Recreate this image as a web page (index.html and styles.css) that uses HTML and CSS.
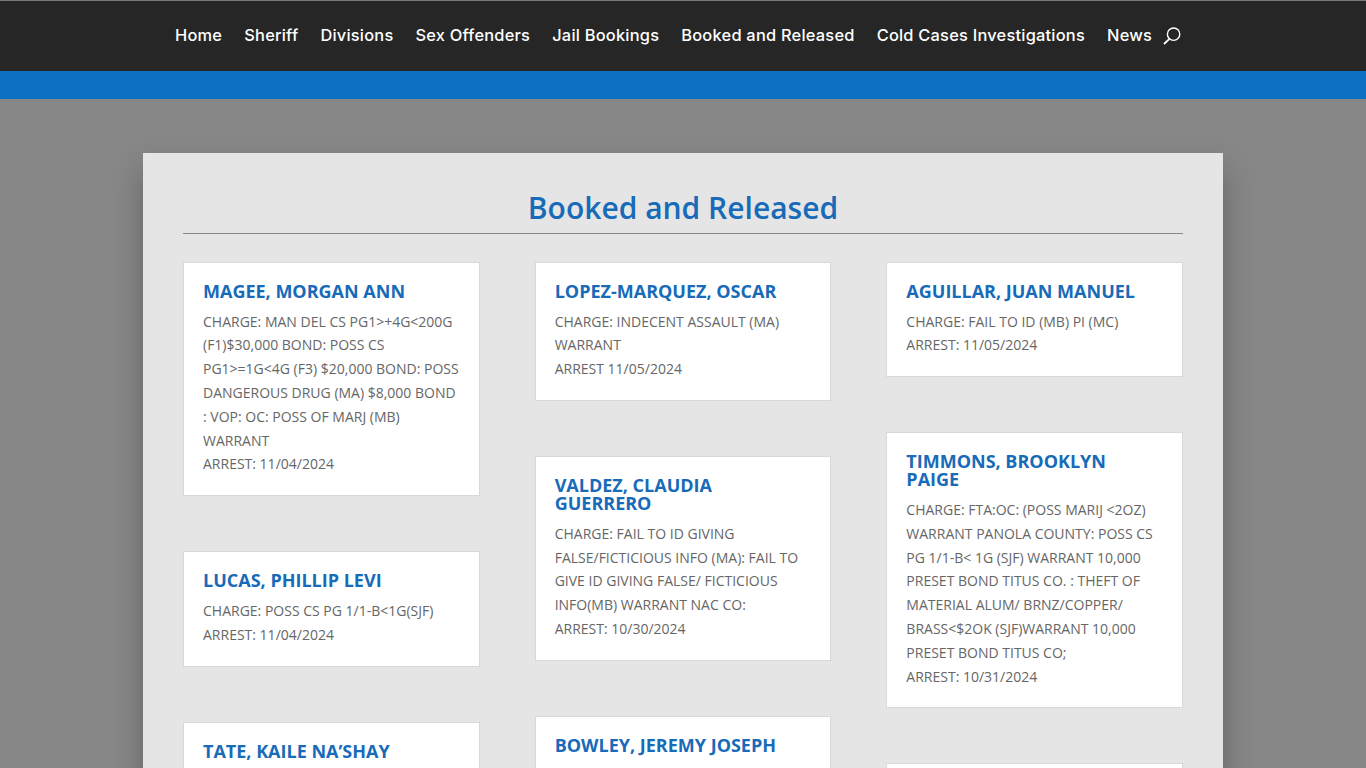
FILE: index.html
```html
<!DOCTYPE html>
<html lang="en">

<head>
    <meta charset="UTF-8">
    <meta name="viewport" content="width=device-width, initial-scale=1.0">
    <title>Booked and Released</title>
    <link rel="stylesheet" href="styles.css">
</head>

<body>
    <div class="page">
        <header class="main-header">
            <nav class="main-nav">
                <a href="#">Home</a>
                <a href="#">Sheriff</a>
                <a href="#">Divisions</a>
                <a href="#">Sex Offenders</a>
                <a href="#">Jail Bookings</a>
                <a href="#">Booked and Released</a>
                <a href="#">Cold Cases Investigations</a>
                <a href="#">News</a>
            </nav>
            <button class="search-btn" aria-label="Search">
                <svg width="18" height="18" viewBox="0 0 18 18" fill="none" stroke="#fff" stroke-width="1.4">
                    <circle cx="10.6" cy="7.2" r="6.2" />
                    <path d="M6.4 11.8 L1 17" stroke-width="1.8" />
                </svg>
            </button>
        </header>
        <div class="blue-bar"></div>

        <main class="panel">
            <h1 class="panel-title">Booked and Released</h1>
            <div class="columns">
                <div class="column">
                    <article class="card">
                        <h2>MAGEE, MORGAN ANN</h2>
                        <p>CHARGE: MAN DEL CS PG1&gt;+4G&lt;200G (F1)$30,000 BOND: POSS CS PG1&gt;=1G&lt;4G (F3) $20,000 BOND: POSS DANGEROUS DRUG (MA) $8,000 BOND : VOP: OC: POSS OF MARJ (MB) WARRANT<br>ARREST: 11/04/2024</p>
                    </article>
                    <article class="card">
                        <h2>LUCAS, PHILLIP LEVI</h2>
                        <p>CHARGE: POSS CS PG 1/1-B&lt;1G(SJF)<br>ARREST: 11/04/2024</p>
                    </article>
                    <article class="card">
                        <h2>TATE, KAILE NA’SHAY</h2>
                    </article>
                </div>
                <div class="column">
                    <article class="card">
                        <h2>LOPEZ-MARQUEZ, OSCAR</h2>
                        <p>CHARGE: INDECENT ASSAULT (MA) WARRANT<br>ARREST 11/05/2024</p>
                    </article>
                    <article class="card">
                        <h2>VALDEZ, CLAUDIA GUERRERO</h2>
                        <p>CHARGE: FAIL TO ID GIVING FALSE/FICTICIOUS INFO (MA): FAIL TO GIVE ID GIVING FALSE/ FICTICIOUS INFO(MB) WARRANT NAC CO:<br>ARREST: 10/30/2024</p>
                    </article>
                    <article class="card">
                        <h2>BOWLEY, JEREMY JOSEPH</h2>
                    </article>
                </div>
                <div class="column">
                    <article class="card">
                        <h2>AGUILLAR, JUAN MANUEL</h2>
                        <p>CHARGE: FAIL TO ID (MB) PI (MC)<br>ARREST: 11/05/2024</p>
                    </article>
                    <article class="card">
                        <h2>TIMMONS, BROOKLYN PAIGE</h2>
                        <p>CHARGE: FTA:OC: (POSS MARIJ &lt;2OZ) WARRANT PANOLA COUNTY: POSS CS PG 1/1-B&lt; 1G (SJF) WARRANT 10,000 PRESET BOND TITUS CO. : THEFT OF MATERIAL ALUM/ BRNZ/COPPER/ BRASS&lt;$2OK (SJF)WARRANT 10,000 PRESET BOND TITUS CO;<br>ARREST: 10/31/2024</p>
                    </article>
                    <article class="card card-empty"></article>
                </div>
            </div>
        </main>
    </div>
</body>

</html>
```

FILE: styles.css
```css
* {
    box-sizing: border-box;
}

html,
body {
    margin: 0;
    padding: 0;
}

body {
    font-family: "Open Sans", "Liberation Sans", sans-serif;
    font-size: 14px;
    color: #666;
    background: #878787;
}

.page {
    height: 768px;
    overflow: hidden;
}

.main-header {
    height: 71px;
    background: #262626;
    border-top: 1px solid #777;
    padding-left: 175px;
    padding-bottom: 2px;
    display: flex;
    align-items: center;
}

.main-nav {
    display: flex;
    gap: 22px;
}

.main-nav a {
    font-family: Inter, "Noto Sans", sans-serif;
    font-size: 16.4px;
    font-weight: 500;
    letter-spacing: 0.23px;
    color: #fff;
    text-decoration: none;
    white-space: nowrap;
}

.search-btn {
    margin: 2px 0 0 11px;
    padding: 0;
    width: 18px;
    height: 18px;
    border: none;
    background: none;
    display: block;
}

.blue-bar {
    height: 28px;
    background: #0c71c3;
}

.panel {
    width: 1080px;
    margin: 54px auto 0;
    padding: 40px 40px 0;
    background: #e5e5e5;
    box-shadow: 0 16px 30px rgba(0, 0, 0, 0.25);
}

.panel-title {
    margin: 0 0 28px;
    padding-bottom: 10px;
    border-bottom: 1px solid #888;
    font-size: 30px;
    font-weight: 600;
    line-height: 30px;
    text-align: center;
    color: #176bb8;
}

.columns {
    display: flex;
    gap: 55px;
    align-items: flex-start;
}

.column {
    flex: 1;
    display: flex;
    flex-direction: column;
    gap: 55px;
}

.card {
    background: #fff;
    border: 1px solid #d8d8d8;
    padding: 19px;
}

.card h2 {
    margin: 0;
    padding-bottom: 9.7px;
    font-size: 18px;
    font-weight: 700;
    line-height: 18px;
    color: #176bb8;
}

.card p {
    margin: 0;
    line-height: 23.8px;
}

.card-empty {
    height: 120px;
}
```
